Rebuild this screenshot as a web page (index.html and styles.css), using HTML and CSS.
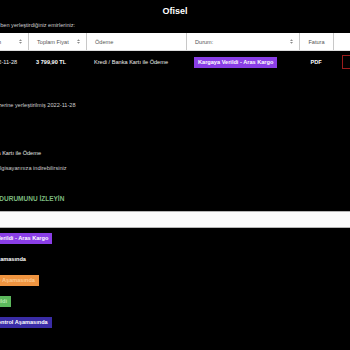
FILE: index.html
```html
<!DOCTYPE html>
<html lang="tr">
<head>
  <meta charset="UTF-8">
  <meta name="viewport" content="width=device-width, initial-scale=1.0">
  <title>Ofisel - Siparişlerim</title>
  <link rel="stylesheet" href="styles.css">
</head>
<body>
  <!-- Top bar -->
  <header class="topbar">
    <h1>Ofisel</h1>
  </header>

  <main class="page">
    <p class="intro">Sitemizden ben yerleştirdiğiniz emirleriniz:</p>

    <!-- Orders table -->
    <div class="orders">
      <div class="orders-row orders-head">
        <div class="cell">Tarih <svg class="sort" viewBox="0 0 4 6"><path d="M0 2.4 2 0 4 2.4Z M0 3.6 2 6 4 3.6Z"/></svg></div>
        <div class="cell">Toplam Fiyat <svg class="sort" viewBox="0 0 4 6"><path d="M0 2.4 2 0 4 2.4Z M0 3.6 2 6 4 3.6Z"/></svg></div>
        <div class="cell">Ödeme</div>
        <div class="cell">Durum: <svg class="sort" viewBox="0 0 4 6"><path d="M0 2.4 2 0 4 2.4Z M0 3.6 2 6 4 3.6Z"/></svg></div>
        <div class="cell cell-center">Fatura</div>
        <div class="cell"></div>
      </div>
      <div class="orders-row">
        <div class="cell">2022-11-28</div>
        <div class="cell cell-bold">3 799,90 TL</div>
        <div class="cell">Kredi / Banka Kartı ile Ödeme</div>
        <div class="cell"><span class="badge badge-purple">Kargaya Verildi - Aras Kargo</span></div>
        <div class="cell cell-center cell-bold">PDF</div>
        <div class="cell"><button type="button" class="btn-cancel">İptal</button></div>
      </div>
    </div>

    <!-- Order details -->
    <section class="details">
      <p class="detail detail-date">Bu sipariş üzerine yerleştirilmiş 2022-11-28</p>
      <p class="detail detail-pay">Kredi / Banka Kartı ile Ödeme</p>
      <p class="detail">Faturanızı bilgisayarınıza indirebilirsiniz</p>
    </section>

    <!-- Tracking -->
    <section class="tracking">
      <h2>SİPARİŞ DURUMUNU İZLEYİN</h2>
      <input type="text" class="track-input" aria-label="Sipariş takip">
      <ul class="status-list">
        <li><span class="badge badge-purple">Kargaya Verildi - Aras Kargo</span></li>
        <li><span class="badge badge-dark">Sipariş Aşamasında</span></li>
        <li><span class="badge badge-orange">Paketleme Aşamasında</span></li>
        <li><span class="badge badge-green">Teslim Edildi</span></li>
        <li><span class="badge badge-indigo">Ödeme Kontrol Aşamasında</span></li>
      </ul>
    </section>
  </main>
</body>
</html>
```

FILE: styles.css
```css
/* Global reset */
* {
  margin: 0;
  padding: 0;
  box-sizing: border-box;
}

body {
  font-family: 'Liberation Sans', Arial, sans-serif;
  background-color: #000;
  color: #ddd;
  font-size: 5.6px;
  overflow: hidden;
  width: 350px;
  height: 350px;
}

/* Top bar */
.topbar {
  height: 20px;
  display: flex;
  align-items: center;
  justify-content: center;
}

.topbar h1 {
  color: #fff;
  font-size: 9px;
  font-weight: bold;
  line-height: 10px;
  margin-top: 2px;
}

/* Page wrapper (scrolled to the right) */
.page {
  margin-left: -31px;
  width: 430px;
}

.intro {
  line-height: 10px;
  color: #cfcfcf;
  padding-left: 2px;
}

/* Orders table */
.orders {
  margin-left: 15px;
  margin-top: 3px;
}

.orders-row {
  display: grid;
  grid-template-columns: 44px 58px 100px 113px 34px 60px;
  height: 22px;
  align-items: center;
  color: #eee;
}

.orders-head {
  height: 18px;
  background-color: #fff;
  color: #555;
  border-bottom: 1px solid #ddd;
}

.cell {
  padding: 0 6px 0 8px;
  display: flex;
  align-items: center;
  justify-content: space-between;
  height: 100%;
  white-space: nowrap;
}

.cell:first-child {
  padding-left: 5px;
}

.orders-head .cell + .cell {
  border-left: 1px solid #c8c8c8;
}

.cell-center {
  justify-content: center;
  padding: 0;
}

.cell-bold {
  font-weight: bold;
  color: #fff;
}

.sort {
  width: 3px;
  height: 5px;
  fill: #8a8a8a;
}

.btn-cancel {
  margin-left: 1px;
  height: 14px;
  width: 30px;
  background: transparent;
  border: 1px solid #9a1c1c;
  color: #d23a3a;
  font-family: inherit;
  font-size: 5.6px;
  font-weight: bold;
}

/* Badges */
.badge {
  display: inline-block;
  font-weight: bold;
  line-height: 7px;
  padding: 2px 4px;
  color: #fff;
  white-space: nowrap;
}

.badge-purple { background-color: #8a3ee6; }
.badge-dark { background-color: #000; }
.badge-orange { background-color: #ef9440; color: #fcc88f; }
.badge-green { background-color: #5cb85c; color: #b7e6b0; }
.badge-indigo { background-color: #3a2ca6; }

/* Order details */
.detail {
  line-height: 10px;
  color: #cfcfcf;
}

.detail-date {
  margin-top: 27px;
}

.detail-pay {
  margin-top: 38px;
  margin-bottom: 5px;
  margin-left: -2px;
  color: #e6e6e6;
}

/* Tracking */
.tracking h2 {
  margin-top: 21px;
  font-size: 6.5px;
  line-height: 10px;
  color: #7dba7f;
  padding-left: 3px;
}

.track-input {
  display: block;
  margin-top: 7px;
  width: 100%;
  height: 17px;
  background-color: #fbfbfb;
  border: 1px solid #b5b5b5;
  border-left: none;
  border-right: none;
}

.status-list {
  list-style: none;
  margin-top: 0;
}

.status-list li {
  height: 21px;
  display: flex;
  align-items: center;
}
```
